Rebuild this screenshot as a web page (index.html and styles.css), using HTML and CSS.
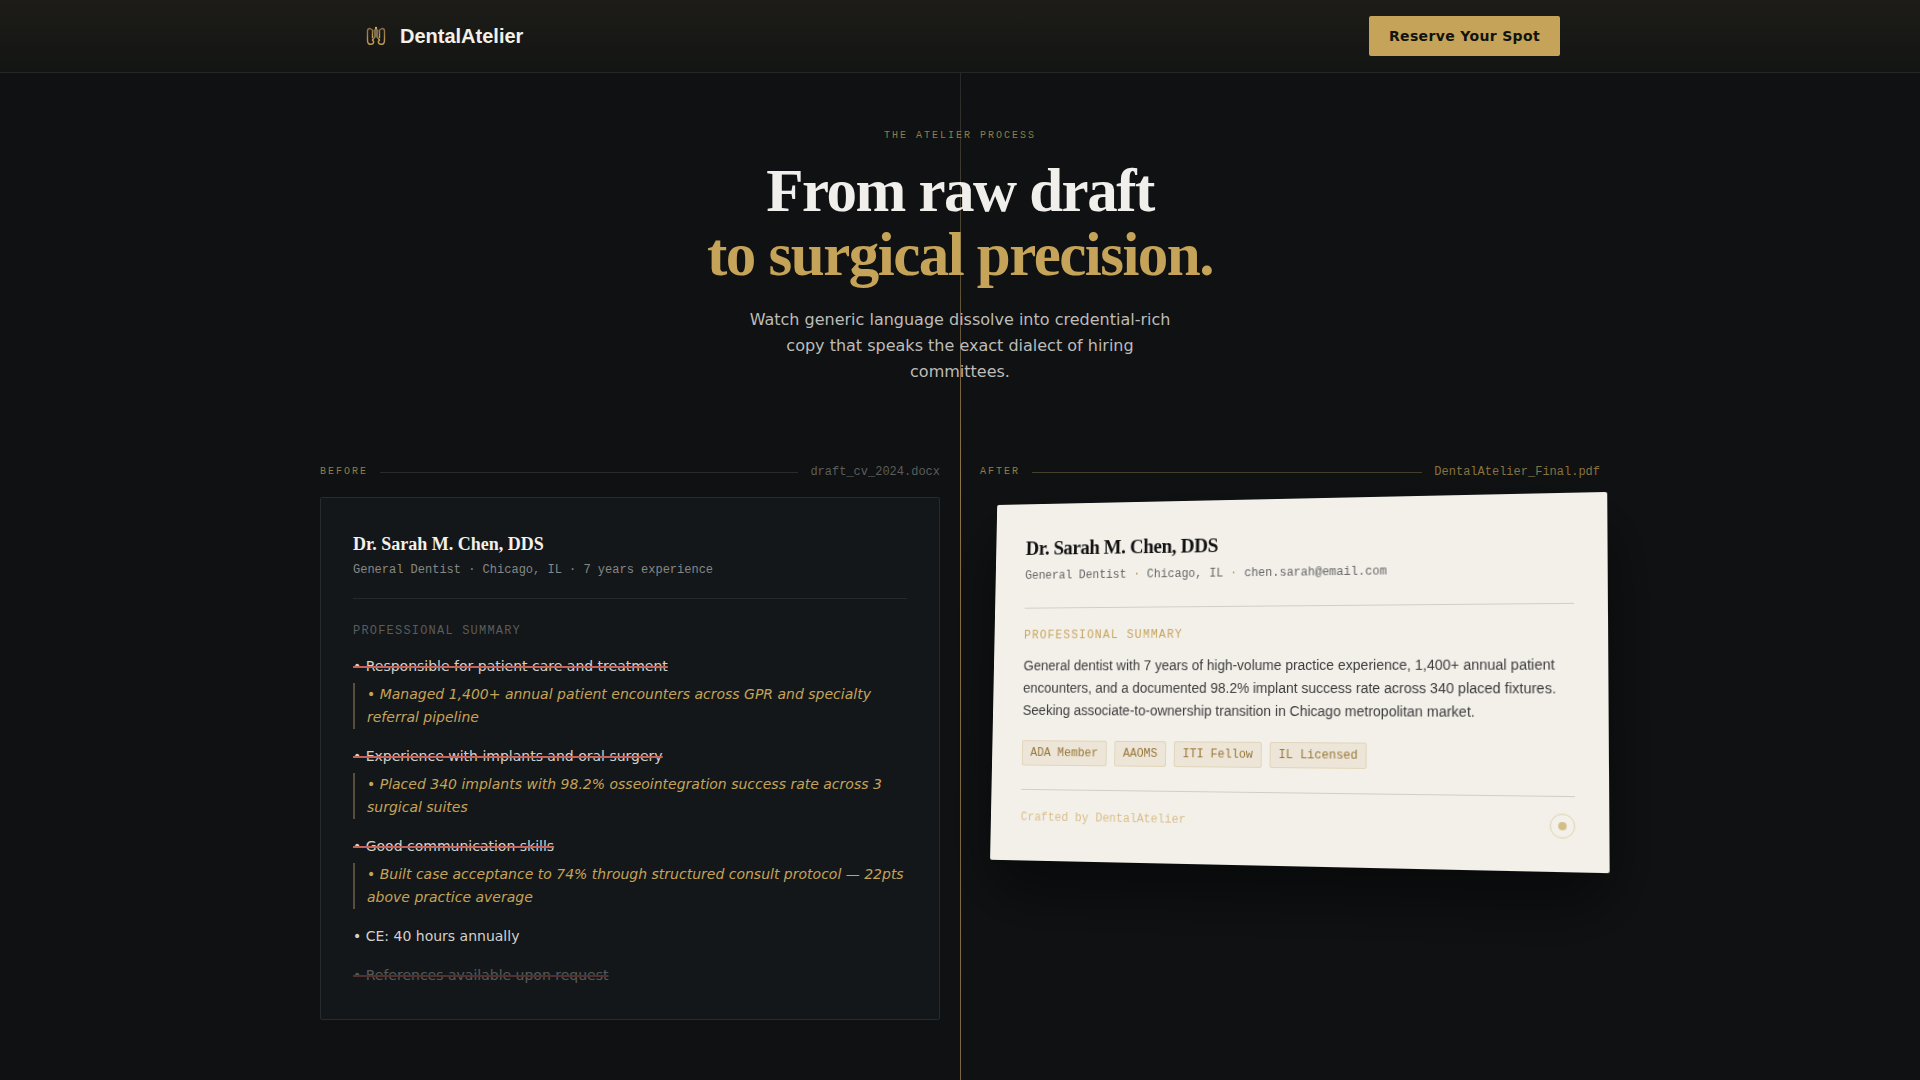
FILE: index.html
```html
<!DOCTYPE html>
<html lang="en">
<head>
  <meta charset="UTF-8">
  <meta name="viewport" content="width=device-width, initial-scale=1.0">
  <title>DentalAtelier</title>
  <link rel="stylesheet" href="styles.css">
</head>
<body>
  <header class="nav">
    <div class="nav-inner">
      <a class="logo" href="#">
        <svg class="logo-mark" viewBox="0 0 32 32" fill="none" aria-hidden="true">
          <defs>
            <linearGradient id="gold" x1="0" y1="0" x2="0" y2="1">
              <stop offset="0" stop-color="#8a6c3e"/>
              <stop offset="1" stop-color="#c8a052"/>
            </linearGradient>
          </defs>
          <g stroke="url(#gold)" stroke-width="1.4" stroke-linecap="round" stroke-linejoin="round">
            <path d="M10 8.500C8 8.500 7.500 9.500 7.500 11v9c0 2.500 1 4.300 2.800 4.300 2 0 3.400-1 3.400-2.800L12.500 20"/>
            <path d="M22 8.500c2 0 2.500 1 2.500 2.500v9c0 2.500-1 4.300-2.800 4.300-2 0-3.400-1-3.400-2.800l1.200-1.500"/>
            <path d="M10 8.500 12.500 10v7.500M22 8.500 19.500 10v7.500"/>
            <path d="M14.800 17 12.500 20M17.200 17l2.300 3"/>
          </g>
          <path d="M13.500 10c1-1 1.700-.8 2.500-2 .8 1.200 1.500 1 2.500 2l-.5 4 .3 3.500h-4.600L14 14z" fill="#7d704f"/>
          <circle cx="16" cy="8" r="1.200" fill="#d2ad62"/>
        </svg>
        <span>DentalAtelier</span>
      </a>
      <button class="reserve" type="button">Reserve Your Spot</button>
    </div>
  </header>

  <main class="process">
    <div class="seam"></div>

    <div class="intro">
      <p class="eyebrow">The Atelier Process</p>
      <h1>From raw draft<br><span>to surgical precision.</span></h1>
      <p class="lead">Watch generic language dissolve into credential-rich copy that speaks the exact dialect of hiring committees.</p>
    </div>

    <div class="compare">
      <section>
        <div class="caption">
          <span class="eyebrow">Before</span>
          <span class="rule"></span>
          <span class="file">draft_cv_2024.docx</span>
        </div>
        <article class="draft">
          <h2>Dr. Sarah M. Chen, DDS</h2>
          <p class="meta">General Dentist · Chicago, IL · 7 years experience</p>
          <h3>Professional Summary</h3>
          <ul>
            <li>
              <del>• Responsible for patient care and treatment</del>
              <ins>• Managed 1,400+ annual patient encounters across GPR and specialty referral pipeline</ins>
            </li>
            <li>
              <del>• Experience with implants and oral surgery</del>
              <ins>• Placed 340 implants with 98.2% osseointegration success rate across 3 surgical suites</ins>
            </li>
            <li>
              <del>• Good communication skills</del>
              <ins>• Built case acceptance to 74% through structured consult protocol — 22pts above practice average</ins>
            </li>
            <li>• CE: 40 hours annually</li>
            <li class="faded"><del>• References available upon request</del></li>
          </ul>
        </article>
      </section>

      <section>
        <div class="caption gold">
          <span class="eyebrow">After</span>
          <span class="rule"></span>
          <span class="file">DentalAtelier_Final.pdf</span>
        </div>
        <article class="final">
          <h2>Dr. Sarah M. Chen, DDS</h2>
          <p class="meta">General Dentist <i>·</i> Chicago, IL <i>·</i> chen.sarah@email.com</p>
          <h3>Professional Summary</h3>
          <p class="summary">General dentist with 7 years of high-volume practice experience, 1,400+ annual patient encounters, and a documented 98.2% implant success rate across 340 placed fixtures. Seeking associate-to-ownership transition in Chicago metropolitan market.</p>
          <ul class="tags">
            <li>ADA Member</li>
            <li>AAOMS</li>
            <li>ITI Fellow</li>
            <li>IL Licensed</li>
          </ul>
          <footer>
            <span>Crafted by DentalAtelier</span>
            <span class="seal"></span>
          </footer>
        </article>
      </section>
    </div>
  </main>
</body>
</html>
```
FILE: styles.css
```css
:root {
  --ink: #0f1112;
  --panel: #131719;
  --paper: #f3f0ea;
  --gold: #c5a358;
  --line: #272b2d;
  --sans: "DejaVu Sans", sans-serif;
  --arial: "Liberation Sans", Arial, sans-serif;
  --serif: "Liberation Serif", "Times New Roman", serif;
  --mono: "Liberation Mono", "Courier New", monospace;
}

* {
  box-sizing: border-box;
  margin: 0;
  padding: 0;
}

body {
  min-height: 100vh;
  display: flex;
  flex-direction: column;
  font-family: var(--sans);
  color: var(--paper);
  background-color: var(--ink);
}

ul {
  list-style: none;
}

/* Nav */
.nav {
  border-bottom: 1px solid #262724;
  background: linear-gradient(#1d1c18, #131514);
}

.nav-inner {
  max-width: 1200px;
  margin: 0 auto;
  padding: 16px 0;
  display: flex;
  justify-content: space-between;
  align-items: center;
}

.logo {
  display: flex;
  align-items: center;
  gap: 8px;
  font: bold 20px/28px var(--arial);
  color: var(--paper);
  text-decoration: none;
}

.logo-mark {
  width: 32px;
  height: 32px;
}

.reserve {
  height: 40px;
  padding: 0 20px;
  border: 0;
  border-radius: 2px;
  font: bold 14px/20px var(--sans);
  letter-spacing: 0.025em;
  color: #12130f;
  background-color: var(--gold);
}

/* Process */
.process {
  position: relative;
  flex: 1;
  padding: 55px 24px 60px;
}

.seam {
  position: absolute;
  top: 0;
  bottom: 0;
  left: 50%;
  width: 1px;
  background: linear-gradient(#262829, #8d7443 40%, #8d7443 60%, #7b6545);
}

.intro {
  position: relative;
  text-align: center;
  margin-bottom: 78px;
}

.eyebrow {
  font: 10px/16px var(--mono);
  letter-spacing: 2px;
  text-transform: uppercase;
  color: #8f7d45;
}

h1 {
  margin: 15px 0 20px;
  font: bold 61px/64px var(--serif);
  letter-spacing: -0.025em;
  color: #f1efec;
}

h1 span {
  color: var(--gold);
}

.lead {
  max-width: 448px;
  margin: 0 auto;
  font-size: 16px;
  line-height: 26px;
  color: #bebcb8;
}

.compare {
  max-width: 1280px;
  margin: 0 auto;
  display: grid;
  grid-template-columns: 1fr 1fr;
  gap: 40px;
  align-items: start;
}

.caption {
  display: flex;
  align-items: center;
  gap: 12px;
  margin-bottom: 16px;
  line-height: 18px;
}

.rule {
  flex: 1;
  height: 1px;
  background-color: var(--line);
}

.file {
  font: 12px/18px var(--mono);
  color: #5c5d5c;
}

.gold .rule {
  background-color: #45402a;
}

.gold .file {
  color: #8a7441;
}

/* Shared by both CV sheets */
h2 {
  font: bold 18px/28px var(--serif);
}

.meta {
  margin-top: 4px;
  font: 12px/16px var(--mono);
}

h3 {
  font: 12px/16px var(--mono);
  letter-spacing: 0.1em;
  text-transform: uppercase;
}

/* Before */
.draft {
  padding: 32px;
  border: 1px solid var(--line);
  border-radius: 2px;
  background-color: var(--panel);
}

.draft .meta {
  padding-bottom: 20px;
  border-bottom: 1px solid #25292a;
  color: #868786;
}

.draft h3 {
  margin: 24px 0 16px;
  color: #5a5c5c;
}

.draft ul {
  display: grid;
  gap: 16px;
  font-size: 14px;
  line-height: 23px;
  color: #d3d1cc;
}

.draft del {
  text-decoration: line-through 2px #c5615b;
}

.draft ins {
  display: block;
  margin-top: 5px;
  padding-left: 12px;
  border-left: 2px solid #5a4e3a;
  font-style: italic;
  text-decoration: none;
  color: var(--gold);
}

.faded {
  opacity: 0.35;
}

/* After */
.final {
  padding: 32px;
  border-radius: 2px;
  color: #111;
  background-color: var(--paper);
  box-shadow: 0 32px 64px rgba(0, 0, 0, 0.5);
  transform: perspective(1200px) rotateY(-8deg) rotateX(3deg);
}

.final h2 {
  font-size: 20px;
  letter-spacing: -0.02em;
}

.final .meta {
  margin-top: 7px;
  padding-bottom: 25px;
  border-bottom: 1px solid #d0cec9;
  color: #666;
}

.meta i {
  font-style: normal;
  color: #b59a5c;
}

.final h3 {
  margin: 20px 0 12px;
  color: #c8a55e;
}

.summary {
  font: 14px/23px var(--arial);
  color: #3c3c3c;
}

.tags {
  display: flex;
  gap: 8px;
  margin: 19px 0 24px;
}

.tags li {
  padding: 4px 8px;
  border: 1px solid #e0d5b8;
  border-radius: 2px;
  font: 12px/16px var(--mono);
  color: #98783a;
  background-color: #ede5d7;
}

.final footer {
  display: flex;
  justify-content: space-between;
  align-items: center;
  padding-top: 16px;
  border-top: 1px solid #d0cec9;
  font: 12px/16px var(--mono);
  color: #d8bf8a;
}

.seal {
  display: grid;
  place-items: center;
  width: 24px;
  height: 24px;
  border: 1px solid #e0d3b0;
  border-radius: 50%;
}

.seal::after {
  content: "";
  width: 8px;
  height: 8px;
  border-radius: 50%;
  background-color: #d4be87;
}
```
